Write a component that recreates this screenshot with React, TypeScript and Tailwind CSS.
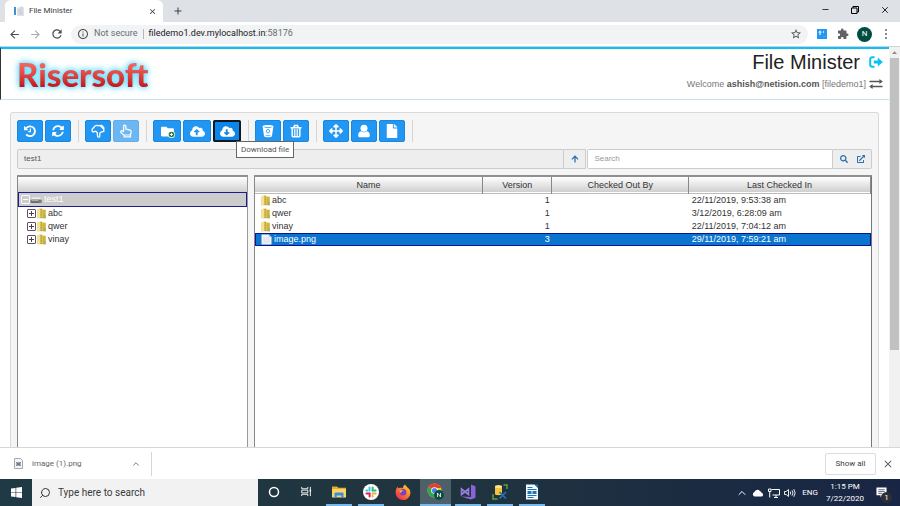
import type { ReactNode } from 'react';
import clsx from 'clsx';
import {
  FaArrowUp,
  FaArrowsAlt,
  FaCloudDownloadAlt,
  FaCloudUploadAlt,
  FaExternalLinkAlt,
  FaFile,
  FaFolder,
  FaSearch,
  FaSyncAlt,
} from 'react-icons/fa';
import {
  MdAdd,
  MdArrowBack,
  MdArrowForward,
  MdClose,
  MdExtension,
  MdInfoOutline,
  MdRefresh,
  MdStarBorder,
} from 'react-icons/md';
import { ChevronUp, Minus, Search, X } from 'lucide-react';

type Row = { name: string; version: string; checkedIn: string; kind: 'folder' | 'file'; selected?: boolean };

const rows: Row[] = [
  { name: 'abc', version: '1', checkedIn: '22/11/2019, 9:53:38 am', kind: 'folder' },
  { name: 'qwer', version: '1', checkedIn: '3/12/2019, 6:28:09 am', kind: 'folder' },
  { name: 'vinay', version: '1', checkedIn: '22/11/2019, 7:04:12 am', kind: 'folder' },
  { name: 'image.png', version: '3', checkedIn: '29/11/2019, 7:59:21 am', kind: 'file', selected: true },
];

const columns = [
  { label: 'Name', width: 'w-[37%]' },
  { label: 'Version', width: 'w-[69px]' },
  { label: 'Checked Out By', width: 'w-[137px]' },
  { label: 'Last Checked In', width: '' },
];

/* ---------- icons ---------- */

function TabIcon() {
  return (
    <svg viewBox="0 0 12 12" className="size-3 shrink-0" aria-hidden="true">
      <path d="M1 2h2v8H1z" fill="#3f8fd6" />
      <path d="M4 3l5-2 2 2v8H4z" fill="#dfe3e8" />
      <path d="M5 5h4M5 7h5M6 9h4M8 3h2" stroke="#b3bac2" strokeWidth=".7" />
    </svg>
  );
}

function ZipFolder() {
  return (
    <svg viewBox="0 0 9 11" className="h-[11px] w-[9px] shrink-0" aria-hidden="true">
      <path d="M.3 1.5L3 .6h2.2l.4.9h3v8.7H.3z" fill="#e3cb62" />
      <path d="M.3 1.5L3 .6v9.6H.3z" fill="#f3e39a" />
      <path d="M5.6 2h3v8.2h-3z" fill="#d3b23c" />
      <path d="M4.2 1v9.5" stroke="#8d7a2c" strokeWidth=".9" strokeDasharray="1 .6" />
      <path d="M8 7v3.4" stroke="#5fa79c" strokeWidth=".8" />
    </svg>
  );
}

function FilePage() {
  return (
    <svg viewBox="0 0 11 11" className="size-[11px] shrink-0" aria-hidden="true">
      <path d="M.5.5h7.3l2.7 2.7v7.3H.5z" fill="#f1f3f5" />
      <path d="M7.8.5v2.7h2.7z" fill="#bcc4cc" />
      <path d="M2 4h6M2 6h7M2 8h7" stroke="#d3d8dc" strokeWidth=".8" />
    </svg>
  );
}

function DriveIcon() {
  return (
    <svg viewBox="0 0 12 8" className="h-2 w-3 shrink-0" aria-hidden="true">
      <path d="M2 1.5h8L11.5 4H.5z" fill="#efefef" />
      <rect x=".4" y="3.6" width="11.2" height="3.4" rx=".8" fill="#6b6f72" />
      <path d="M1.5 4.6h7" stroke="#c5c8ca" strokeWidth=".8" />
      <rect x="9.3" y="5" width="1.4" height="1.2" fill="#5cc453" />
    </svg>
  );
}

function ExpandBox({ open, light }: { open?: boolean; light?: boolean }) {
  return (
    <svg
      viewBox="0 0 9 9"
      className={clsx('size-[9px] shrink-0', light ? 'text-white' : 'text-[#4c3f52]')}
      fill="none"
      stroke="currentColor"
      aria-hidden="true"
    >
      <rect x=".5" y=".5" width="8" height="8" rx=".5" strokeWidth=".9" />
      <path d={open ? 'M2 4.5h5' : 'M2 4.5h5M4.5 2v5'} />
    </svg>
  );
}

function HistoryIcon() {
  return (
    <svg viewBox="0 0 14 14" className="size-[14px]" fill="none" stroke="#fff" aria-hidden="true">
      <path d="M3.2 4.2A4.9 4.9 0 1 1 3.200 10.300" strokeWidth="1.9" />
      <path d="M1 1.8v4.400h4.400z" fill="#fff" stroke="none" />
      <path d="M7.400 4.500v3.100H5.200" strokeWidth="1.2" />
    </svg>
  );
}

function HandDownIcon() {
  return (
    <svg viewBox="0 0 14 14" className="size-[14px]" fill="none" stroke="#fff" strokeWidth="1.3" strokeLinejoin="round" aria-hidden="true">
      <path d="M1.200 5.200L4 2l1.500-.6 3 .3 2-.4 2.300 2.500v3.600L10.300 8l-1.500 1.200v3c0 1.200-2.100 1.300-2.200 0L6.200 8.600 4.600 7.200 2.500 8C1 8 .7 6.300 1.200 5.200z" />
      <path d="M9.200 1.600l3.600 3.800" />
    </svg>
  );
}

function HandUpIcon() {
  return (
    <svg viewBox="0 0 14 14" className="size-[14px]" fill="none" stroke="#fff" strokeWidth="1.3" strokeLinejoin="round" aria-hidden="true">
      <path d="M4.600 7.300V2.200c0-1.500 2.300-1.500 2.300 0v2.900l4.100.9c1 .3 1.300 1 1.200 1.900l-.7 2.600v2.400H5.200v-1.600L1.900 8.400C1.200 7.200 2.600 6.300 3.500 7z" />
      <path d="M5.200 11h6.200" strokeWidth="1" />
    </svg>
  );
}

function NewFolderIcon() {
  return (
    <span className="relative">
      <FaFolder className="size-[13px]" />
      <svg viewBox="0 0 8 8" className="absolute -right-px bottom-0 size-[7px]" aria-hidden="true">
        <circle cx="4" cy="4" r="4" fill="#fff" />
        <circle cx="4" cy="4" r="3.2" fill="#2c7d3b" />
        <path d="M4 2.2v3.6M2.2 4h3.6" stroke="#fff" />
      </svg>
    </span>
  );
}

function RecycleBinIcon() {
  return (
    <svg viewBox="0 0 14 14" className="size-[14px]" aria-hidden="true">
      <path d="M1.600 2.200C1.600.6 12.400.6 12.400 2.200L11 12c-.3 1.800-7.700 1.800-8 0z" fill="#fff" />
      <path d="M3.400 3c1.800.8 5.400.8 7.200 0" stroke="#2196f3" strokeWidth=".8" fill="none" />
      <circle cx="7" cy="7.200" r="1.700" stroke="#2196f3" strokeWidth=".8" fill="none" />
      <path d="M4.600 11.200c1.400.6 3.400.6 4.800 0" stroke="#2196f3" strokeWidth=".7" fill="none" />
    </svg>
  );
}

function TrashIcon() {
  return (
    <svg viewBox="0 0 14 14" className="size-[14px]" fill="none" stroke="#fff" aria-hidden="true">
      <path d="M1.500 3.700h11M4.900 3.400l.6-1.800h3l.6 1.800" strokeWidth="1.5" />
      <path d="M3.200 4v8c0 .4.300.7.800.7h6c.5 0 .8-.3.8-.7V4" strokeWidth="1.5" />
      <path d="M5.400 5v7.500M7 5v7.500M8.600 5v7.500" strokeWidth=".9" />
    </svg>
  );
}

function PersonIcon() {
  return (
    <svg viewBox="0 0 14 14" className="size-[14px]" fill="#fff" aria-hidden="true">
      <circle cx="7" cy="4.3" r="3.5" />
      <path d="M4.200 7.200c1.600 1.400 4 1.400 5.600 0 2.300.2 3 2.200 3 4.300 0 1-.7 1.800-1.700 1.800H2.900c-1 0-1.700-.8-1.700-1.800 0-2.100.7-4.100 3-4.300z" />
    </svg>
  );
}

function LogoutIcon() {
  return (
    <svg viewBox="0 0 14 12" className="h-3 w-[14px]" aria-hidden="true">
      <path d="M5.500 1.200H3.200A2 2 0 0 0 1.200 3.200v5.600a2 2 0 0 0 2 2h2.300" fill="none" stroke="#0bc0f7" strokeWidth="2" />
      <path d="M4.800 4.400h4V1.600L13.800 6l-5 4.400V7.600h-4z" fill="#0bc0f7" />
    </svg>
  );
}

function SwapIcon() {
  return (
    <svg viewBox="0 0 14 10" className="h-[10px] w-[14px]" aria-hidden="true">
      <path d="M.5 2.500h11M2.500 7.500h11" stroke="#555" strokeWidth="1.5" />
      <path d="M10.400.1l3.400 2.400-3.400 2.400zM3.600 5.100L.2 7.500l3.400 2.400z" fill="#555" />
    </svg>
  );
}

/* ---------- browser chrome ---------- */

function TabStrip() {
  return (
    <div className="flex h-[22px] shrink-0 bg-[#dee1e6] pl-[5px] text-[#3c4043]">
      <div className="flex w-[158px] items-center gap-[4px] rounded-t-md bg-white pr-[6px] pl-2">
        <TabIcon />
        <span className="flex-1 text-[8px]">File Minister</span>
        <button aria-label="Close tab">
          <MdClose className="size-[9px]" />
        </button>
      </div>
      <button aria-label="New tab" className="flex w-[30px] items-center justify-center">
        <MdAdd className="size-3" />
      </button>
      <div className="ml-auto flex h-[19px] items-center gap-[21px] pr-[10px] text-black">
        <button aria-label="Minimize">
          <Minus className="size-[9px]" />
        </button>
        <button aria-label="Restore">
          <svg viewBox="0 0 8 8" className="size-2" fill="none" stroke="currentColor" strokeWidth="1">
            <path d="M.5 2h5.500v5.500H.5zM2 2V.5h5.500V6H6" />
          </svg>
        </button>
        <button aria-label="Close window">
          <X className="size-[10px]" />
        </button>
      </div>
    </div>
  );
}

function AddressBar() {
  return (
    <div className="flex h-[25px] shrink-0 items-center border-b border-[#d0d3d6] bg-white pr-[12px] pl-[8px] text-[#4a4e52]">
      <div className="flex w-[63px] items-center gap-[8px]">
        <button aria-label="Back">
          <MdArrowBack className="size-[13px]" />
        </button>
        <button aria-label="Forward" className="text-[#a8abae]">
          <MdArrowForward className="size-[13px]" />
        </button>
        <button aria-label="Reload">
          <MdRefresh className="size-[14px]" />
        </button>
      </div>
      <div className="flex h-[19px] flex-1 items-center rounded-full bg-[#f1f3f4] pr-[6px] pl-[6px] text-[9px]">
        <MdInfoOutline className="size-3" />
        <span className="ml-[5px] text-[#6a6e72]">Not secure</span>
        <span className="mx-[5px] h-[10px] w-px bg-[#b4b7ba]" />
        <span className="text-[#202124]">
          filedemo1.dev.mylocalhost.in<span className="text-[#6a6e72]">:58176</span>
        </span>
        <button aria-label="Bookmark" className="ml-auto">
          <MdStarBorder className="size-3" />
        </button>
      </div>
      <button aria-label="Extension" className="ml-[9px]">
        <svg viewBox="0 0 10 10" className="size-[10px]">
          <path d="M0 0h10v10H0z" fill="#2196f3" />
          <path d="M3 1.500L1.200 3.500h1.200V6h1.200V3.500h1.200zM6 2h.8v2H6zM6 7.500h3" fill="#fff" stroke="#8cc8fb" strokeWidth=".3" />
        </svg>
      </button>
      <button aria-label="Extensions" className="ml-[10px] text-[#5f6368]">
        <MdExtension className="size-3" />
      </button>
      <button
        aria-label="Profile"
        className="ml-[8px] flex size-[15px] items-center justify-center rounded-full bg-[#004d40] text-[8px] text-white"
      >
        N
      </button>
      <button aria-label="Menu" className="ml-[12px] flex w-1 flex-col items-center gap-[2px]">
        <i className="size-[2px] rounded-full bg-[#5f6368]" />
        <i className="size-[2px] rounded-full bg-[#5f6368]" />
        <i className="size-[2px] rounded-full bg-[#5f6368]" />
      </button>
    </div>
  );
}

function Scrollbar() {
  return (
    <div className="flex w-[11px] shrink-0 flex-col items-center bg-[#f1f1f1]">
      <svg viewBox="0 0 11 11" className="size-[11px] shrink-0" aria-hidden="true">
        <path d="M3 7h5L5.500 4.200z" fill="#8b8b8b" />
      </svg>
      <div className="h-[73%] w-[9px] bg-[#c1c1c1]" />
    </div>
  );
}

/* ---------- page ---------- */

function PageHeader() {
  return (
    <header className="flex h-[53px] shrink-0 items-center justify-between border-t-2 border-b border-l border-t-[#0bc0f7] border-b-[#c9e2ec] border-l-[#333] bg-white pr-[6px] pl-[16px]">
      <a
        href="#"
        className="font-[Lato,sans-serif] text-[33px] leading-[40px] font-black drop-shadow-[0_0_2px_#8fe6ff]"
      >
        <span className="inline-block bg-gradient-to-b from-[#f4655f] from-25% to-[#c9161b] to-80% bg-clip-text text-transparent drop-shadow-[0_0_3px_#5fd9ff]">
          Risersoft
        </span>
      </a>
      <div className="flex flex-col items-end self-start">
        <div className="flex items-center gap-[9px]">
          <h1 className="text-[20px] leading-[26px] text-[#222]">File Minister</h1>
          <button aria-label="Log out">
            <LogoutIcon />
          </button>
        </div>
        <div className="flex items-center gap-[3px] text-[9px] leading-[18px] text-[#777]">
          <span>
            Welcome <b className="text-[#555]">ashish@netision.com</b> [filedemo1]
          </span>
          <button aria-label="Switch account">
            <SwapIcon />
          </button>
        </div>
      </div>
    </header>
  );
}

type ToolProps = { label: string; children: ReactNode; disabled?: boolean; focused?: boolean; wide?: boolean };

function Tool({ label, children, disabled, focused, wide }: ToolProps) {
  return (
    <div className="relative">
      <button
        aria-label={label}
        disabled={disabled}
        className={clsx(
          'flex h-[22px] items-center justify-center rounded-[2px] border border-[#1a86dd] text-white disabled:opacity-65',
          wide ? 'w-7' : 'w-[26px]',
          focused ? 'bg-[#0c86ea] outline-2 -outline-offset-2 outline-[#101820]' : 'bg-[#2196f3]',
        )}
      >
        {children}
      </button>
      {focused && (
        <div
          role="tooltip"
          className="absolute top-[21px] left-[23px] z-10 border border-[#666] bg-white px-1 font-[Roboto,sans-serif] text-[8px] leading-[15px] whitespace-nowrap text-[#555]"
        >
          {label}
        </div>
      )}
    </div>
  );
}

function ToolGroup({ children }: { children: ReactNode }) {
  return <div className="mr-[6px] flex gap-[2px] border-r border-[#d5d5d5] pr-[7px]">{children}</div>;
}

function Toolbar() {
  return (
    <div className="flex h-[22px] shrink-0">
      <ToolGroup>
        <Tool label="History">
          <HistoryIcon />
        </Tool>
        <Tool label="Refresh">
          <FaSyncAlt className="size-3" />
        </Tool>
      </ToolGroup>
      <ToolGroup>
        <Tool label="Check out">
          <HandDownIcon />
        </Tool>
        <Tool label="Check in" disabled>
          <HandUpIcon />
        </Tool>
      </ToolGroup>
      <ToolGroup>
        <Tool label="New folder" wide>
          <NewFolderIcon />
        </Tool>
        <Tool label="Upload file" wide>
          <FaCloudUploadAlt className="size-[15px]" />
        </Tool>
        <Tool label="Download file" wide focused>
          <FaCloudDownloadAlt className="size-[15px]" />
        </Tool>
      </ToolGroup>
      <ToolGroup>
        <Tool label="Recycle bin">
          <RecycleBinIcon />
        </Tool>
        <Tool label="Delete">
          <TrashIcon />
        </Tool>
      </ToolGroup>
      <ToolGroup>
        <Tool label="Move">
          <FaArrowsAlt className="size-[14px]" />
        </Tool>
        <Tool label="Permissions">
          <PersonIcon />
        </Tool>
        <Tool label="Properties">
          <FaFile className="size-[14px]" />
        </Tool>
      </ToolGroup>
    </div>
  );
}

function PathBar() {
  return (
    <div className="mt-[7px] flex h-5 shrink-0 text-[8px] text-[#555]">
      <div className="flex flex-[553] items-center rounded-l-[2px] border border-[#ccc] bg-[#eee] px-[6px]">test1</div>
      <button
        aria-label="Up one level"
        className="flex w-[22px] items-center justify-center border border-l-0 border-[#ccc] bg-[#eee] text-[#2a6db0]"
      >
        <FaArrowUp className="size-2" />
      </button>
      <input
        aria-label="Search"
        placeholder="Search"
        className="ml-px min-w-0 flex-[240] rounded-l-[2px] border border-[#ccc] bg-white px-[6px] placeholder:text-[#999]"
      />
      <div className="flex w-[39px] items-center justify-center gap-[9px] rounded-r-[2px] border border-l-0 border-[#ccc] bg-[#eee] text-[#2a6db0]">
        <button aria-label="Run search">
          <FaSearch className="size-2" />
        </button>
        <button aria-label="Open in new window">
          <FaExternalLinkAlt className="size-2" />
        </button>
      </div>
    </div>
  );
}

function FolderTree() {
  return (
    <nav className="flex-[230] border-x border-t-2 border-t-[#909090] border-r-[#999] border-l-[#888] bg-white">
      <div className="h-[15px] bg-gradient-to-b from-white to-[#cfcfcf]" />
      <div className="flex h-[15px] items-center border border-[#1c1c8c] bg-[#ccc] pl-[2px] text-white">
        <ExpandBox open light />
        <DriveIcon />
        <span className="pl-[2px]">test1</span>
      </div>
      <ul>
        {['abc', 'qwer', 'vinay'].map((name) => (
          <li key={name} className="flex h-[13px] items-center gap-px pl-[9px]">
            <ExpandBox />
            <ZipFolder />
            <span className="pl-px">{name}</span>
          </li>
        ))}
      </ul>
    </nav>
  );
}

function FileTable() {
  return (
    <div className="flex-[619] border-x border-t-2 border-t-[#909090] border-r-[#777] border-l-[#888] bg-white">
      <table className="w-full table-fixed border-collapse">
        <thead>
          <tr className="h-4 border-b border-[#bbb] bg-gradient-to-b from-white to-[#cfcfcf]">
            {columns.map((column) => (
              <th
                key={column.label}
                className={clsx('border-r border-[#888] p-0 pt-px text-center font-normal', column.width)}
              >
                {column.label}
              </th>
            ))}
          </tr>
        </thead>
        <tbody>
          {rows.map((row) => (
            <tr
              key={row.name}
              className={clsx('h-[13px]', row.selected && 'bg-[#0a75cf] text-white outline outline-[#0a1494] -outline-offset-1')}
            >
              <td className="p-0 pl-[6px]">
                <div className="flex items-center gap-[2px]">
                  {row.kind === 'folder' ? <ZipFolder /> : <FilePage />}
                  <span>{row.name}</span>
                </div>
              </td>
              <td className="p-0 pr-[2px] text-right">{row.version}</td>
              <td className="p-0" />
              <td className="p-0 pl-[3px]">{row.checkedIn}</td>
            </tr>
          ))}
        </tbody>
      </table>
    </div>
  );
}

/* ---------- downloads and taskbar ---------- */

function DownloadBar() {
  return (
    <div className="flex h-8 shrink-0 items-center border-t border-[#d5d7da] bg-white text-[8px] text-[#5f6368]">
      <div className="flex h-6 w-[152px] items-center border-r border-[#d5d7da] pr-[10px] pl-[14px]">
        <svg viewBox="0 0 9 11" className="h-[11px] w-[9px] shrink-0" aria-hidden="true">
          <path d="M.5.5h6l2 2v8h-8z" fill="#f4f4f4" stroke="#aaa" />
          <path d="M2 4h5v4H2z" fill="#9db4ba" />
          <path d="M2.500 4.500l4 3M6.500 4.500l-4 3" stroke="#557" strokeWidth=".8" />
        </svg>
        <span className="ml-[9px] flex-1">image (1).png</span>
        <button aria-label="Download options">
          <ChevronUp className="size-[10px]" />
        </button>
      </div>
      <button className="mr-[6px] ml-auto h-[22px] w-[51px] rounded-[2px] border border-[#dadce0] text-[#3c4043]">
        Show all
      </button>
      <button aria-label="Close downloads bar" className="mr-[6px]">
        <MdClose className="size-3" />
      </button>
    </div>
  );
}

type TaskButtonProps = { label: string; children: ReactNode; running?: boolean; active?: boolean };

function TaskButton({ label, children, running, active }: TaskButtonProps) {
  return (
    <button
      aria-label={label}
      className={clsx(
        'flex h-full items-center justify-center border-b-2',
        running ? 'border-[#76b9ed]' : 'border-transparent',
        active ? 'mx-px w-[31px] bg-[#4d5f68]' : 'mx-[3px] w-[26px]',
      )}
    >
      {children}
    </button>
  );
}

function TaskbarApps() {
  return (
    <div className="flex h-full items-center text-white">
      <TaskButton label="Cortana">
        <svg viewBox="0 0 12 12" className="size-3">
          <circle cx="6" cy="6" r="4.5" fill="none" stroke="#fff" strokeWidth="1.5" />
        </svg>
      </TaskButton>
      <TaskButton label="Task view">
        <svg viewBox="0 0 12 12" className="size-[11px]" fill="none" stroke="#fff">
          <path d="M.8 1v2h6.600V1M.8 11V9h6.600v2M.8 4.500h6.600v3H.8zM10.200 1v10" />
          <path d="M9.500 4h1.500v2H9.500z" fill="#fff" stroke="none" />
        </svg>
      </TaskButton>
      <div className="w-px" />
      <TaskButton label="File Explorer" running>
        <svg viewBox="0 0 16 14" className="h-[14px] w-4">
          <path d="M1 1.500h5l1.500 1.300H15V12H1z" fill="#e8a92d" />
          <path d="M1 4h14v8.500H1z" fill="#fbd667" />
          <path d="M3.500 13V8.500q0-1 1-1h7q1 0 1 1V13h-2.200v-2.500H5.700V13z" fill="#3a8ee0" />
        </svg>
      </TaskButton>
      <TaskButton label="Slack" running>
        <svg viewBox="0 0 16 16" className="size-4" fill="none" strokeWidth="2" strokeLinecap="round">
          <circle cx="8" cy="8" r="8" fill="#fff" />
          <path d="M6.500 3.500v3.200M3.500 6.500h.7" stroke="#36c5f0" />
          <path d="M9.600 3.500v3.200M9.600 6.600h3" stroke="#2eb67d" />
          <path d="M9.500 9.600h3.200M9.600 12.500v-.7" stroke="#ecb22e" />
          <path d="M3.500 9.500h3.100v3" stroke="#e01e5a" />
        </svg>
      </TaskButton>
      <TaskButton label="Firefox">
        <svg viewBox="0 0 16 16" className="size-4">
          <defs>
            <linearGradient id="fox" x1="1" y1="0" x2=".2" y2="1">
              <stop offset="0" stopColor="#ffe24a" />
              <stop offset=".45" stopColor="#ff8a1f" />
              <stop offset="1" stopColor="#f0245a" />
            </linearGradient>
          </defs>
          <path
            d="M10 .5c1 1.300 1.500 2 2.500 3 1.500 1 3 3 2.900 5.400A7.400 7.400 0 1 1 .7 7.500C.8 5.500 1.500 4 2.600 2.800l.6 1.500L5 3.800c1-.4 2 0 2.700.4C8 2.500 9 1.500 10 .5z"
            fill="url(#fox)"
          />
          <circle cx="8" cy="8.3" r="3.3" fill="#7b3fd0" />
          <path d="M4.500 6.500c1.500-1 3-.6 4 .2-1.200.2-2 .6-2 1.500L5 9z" fill="#ffb02e" />
        </svg>
      </TaskButton>
      <TaskButton label="Chrome" running active>
        <svg viewBox="0 0 17 17" className="size-[17px]">
          <circle cx="7.5" cy="7.5" r="7" fill="#f4c430" />
          <path d="M7.500 7.500L1.400 4A7 7 0 0 1 14 5H7.500z" fill="#e5402f" />
          <path d="M1.400 4A7 7 0 0 0 7.300 14.500L10 9z" fill="#35a352" />
          <circle cx="7.5" cy="7.5" r="3.3" fill="#fff" />
          <circle cx="7.5" cy="7.5" r="2.6" fill="#4285f4" />
          <circle cx="12" cy="12" r="4.9" fill="#0c4d43" />
          <path d="M10.500 14v-4l3 4v-4" fill="none" stroke="#fff" strokeWidth=".8" />
        </svg>
      </TaskButton>
      <TaskButton label="Visual Studio" running>
        <svg viewBox="0 0 16 16" className="size-4">
          <path d="M11 .5l4.500 1.700v11.600L11 15.500z" fill="#8a63d6" />
          <path d="M.8 12.500L11 13v2.500z" fill="#8a66d8" />
          <path d="M1.500 5v5.500l7-5.500v5.500z" fill="none" stroke="#9b7be0" strokeWidth="1.6" />
        </svg>
      </TaskButton>
      <TaskButton label="Database tools" running>
        <svg viewBox="0 0 16 16" className="size-4" fill="none">
          <path d="M11.500 1H15v4M1 10v5h4.500" stroke="#58a83a" strokeWidth="1.4" />
          <path d="M3 2.500v7.500c0 1.600 7 1.600 7 0V2.500z" fill="#f4c33a" />
          <ellipse cx="6.5" cy="2.5" rx="3.5" ry="1.5" fill="#ffe28a" />
          <path d="M7.500 8l6.500 6.500M14 8l-6.500 6.500" stroke="#2773b8" strokeWidth="1.7" />
        </svg>
      </TaskButton>
      <TaskButton label="Writer" running>
        <svg viewBox="0 0 14 16" className="h-4 w-[14px]">
          <path d="M1 .5h8.500L13 4v11.500H1z" fill="#f5f9fc" />
          <path d="M9.500.5L13 4V.5z" fill="#1c75bc" />
          <path d="M2.500 3.500h5M2.500 5.500h9M2.500 11.500h9M2.500 13.500h6" stroke="#1c75bc" />
          <path d="M2.500 7h4v3h-4zM7.500 7h4v3h-4z" fill="#1c75bc" />
        </svg>
      </TaskButton>
    </div>
  );
}

function SystemTray() {
  return (
    <div className="ml-auto flex items-center pr-[13px] text-[8px] text-white">
      <ChevronUp className="size-3" />
      <svg viewBox="0 0 12 8" className="ml-[4px] h-2 w-3" aria-label="OneDrive">
        <path d="M2.500 7.500a2.200 2.200 0 0 1-.2-4.200A3.200 3.200 0 0 1 8 2.200a2.500 2.500 0 0 1 1.600 1.600 1.900 1.900 0 0 1 0 3.700z" fill="#fff" />
      </svg>
      <svg viewBox="0 0 12 10" className="ml-[4px] h-[10px] w-3" fill="none" stroke="#fff" aria-label="Network">
        <path d="M3.500 1.500h8v5.500h-7M6 9.500h4M8 7v2.500M.5 1h2.500v2.500H.5zM1.700 3.500v6" />
      </svg>
      <svg viewBox="0 0 12 10" className="ml-[4px] h-[10px] w-3" fill="none" stroke="#fff" strokeWidth=".9" aria-label="Volume">
        <path d="M.5 3.500h1.700L4.500 1.500v7L2.200 6.500H.5zM6.200 3.500q1 1.500 0 3M8 2.300q2 2.700 0 5.400M9.800 1.200q2.700 3.800 0 7.600" />
      </svg>
      <span className="ml-[6px]">ENG</span>
      <div className="ml-2 text-center leading-[12px]">
        <div>1:15 PM</div>
        <div>7/22/2020</div>
      </div>
      <button aria-label="Notifications" className="relative ml-[12px]">
        <svg viewBox="0 0 12 12" className="size-[11px]">
          <path d="M.5.5h11v8.500h-4L5 11.500V9H.5z" fill="#fff" />
          <path d="M2.500 3h7M2.500 5h7M2.500 7h4" stroke="#26354a" strokeWidth=".8" />
        </svg>
        <span className="absolute top-[5px] left-[5px] flex size-[11px] items-center justify-center rounded-full bg-[#2c2f33] text-[8px]">
          1
        </span>
      </button>
    </div>
  );
}

function Taskbar() {
  return (
    <div className="flex h-[27px] shrink-0 items-center bg-gradient-to-r from-[#1f3a44] via-[#20343f] to-[#182544]">
      <button aria-label="Start" className="flex h-full w-8 items-center justify-center">
        <svg viewBox="0 0 12 12" className="size-[11px]" fill="#fff">
          <path d="M0 1.700l5-.7v4.600H0zM5.700.9L12 0v5.600H5.700zM0 6.300h5V11l-5-.7zM5.700 6.300H12V12l-6.300-.9z" />
        </svg>
      </button>
      <label className="flex h-full w-[226px] items-center gap-[7px] bg-[#f2f2f2] pl-[7px]">
        <Search className="size-3 -scale-x-100 text-[#333]" strokeWidth={2} />
        <input
          aria-label="Type here to search"
          placeholder="Type here to search"
          className="min-w-0 flex-1 text-[10px] placeholder:text-[#3a3a3a]"
        />
      </label>
      <TaskbarApps />
      <SystemTray />
    </div>
  );
}

export default function App() {
  return (
    <div className="flex h-screen flex-col overflow-hidden bg-white font-[Roboto,'Open_Sans',sans-serif]">
      <TabStrip />
      <AddressBar />
      <div className="flex min-h-0 flex-1">
        <div className="flex min-w-0 flex-1 flex-col font-['Liberation_Sans',Arial,sans-serif]">
          <PageHeader />
          <main className="mx-[10px] mt-3 flex min-h-0 flex-1 flex-col rounded-t-[3px] border border-b-0 border-[#d9d9d9] bg-[#f5f5f5] px-[6px] pt-[7px]">
            <Toolbar />
            <PathBar />
            <div className="mt-[6px] flex min-h-0 flex-1 gap-[6px] text-[9px] leading-[13px] text-[#333]">
              <FolderTree />
              <FileTable />
            </div>
          </main>
        </div>
        <Scrollbar />
      </div>
      <DownloadBar />
      <Taskbar />
    </div>
  );
}
